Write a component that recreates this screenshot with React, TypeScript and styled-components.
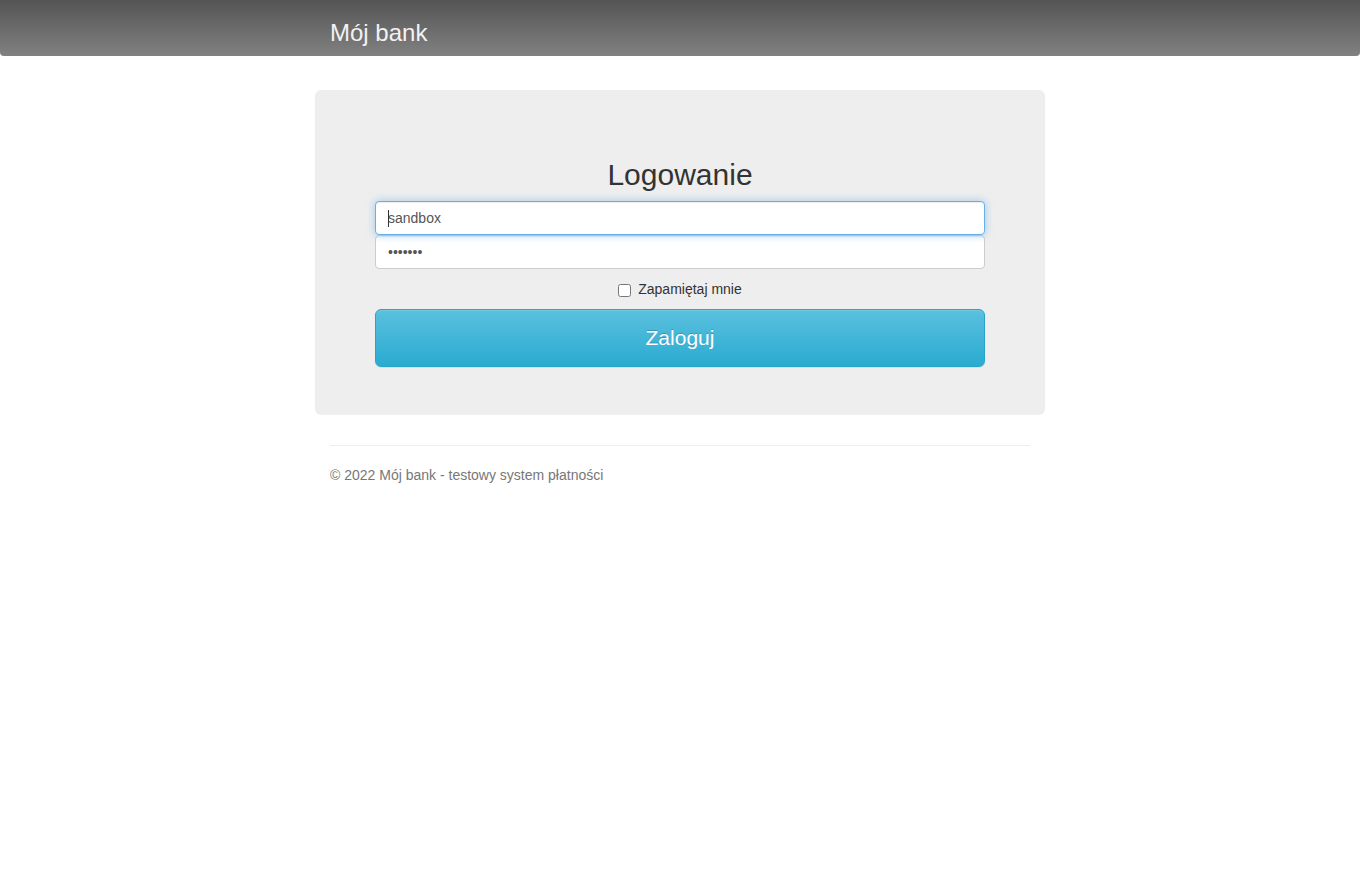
import React from "react";
import styled, { createGlobalStyle } from "styled-components";

const Global = createGlobalStyle`
  html, body { margin: 0; padding: 0; background: #fff; }
  body {
    font-family: "Liberation Sans", Arial, sans-serif;
    font-size: 14px;
    line-height: 1.42857;
    color: #333;
  }
  * { box-sizing: border-box; }
`;

const Navbar = styled.header`
  height: 56px;
  background: linear-gradient(to bottom, #545454 0%, #818181 100%);
  border-radius: 0 0 4px 4px;
  display: flex;
  justify-content: center;
`;

const NavInner = styled.div`
  width: 730px;
  padding: 0 15px;
  display: flex;
  align-items: flex-end;
`;

const Brand = styled.span`
  font-size: 24px;
  line-height: 28px;
  color: #f2f2f2;
  padding-bottom: 9px;
`;

const Container = styled.main`
  width: 730px;
  margin: 34px auto 0;
`;

const Card = styled.section`
  background: #eee;
  border-radius: 6px;
  padding: 48px 60px;
`;

const Form = styled.form`
  display: flex;
  flex-direction: column;
`;

const Heading = styled.h2`
  margin: 20px 0 10px;
  font-size: 30px;
  font-weight: 400;
  line-height: 33px;
  text-align: center;
  color: #333;
`;

const Field = styled.div`
  position: relative;
`;

const Caret = styled.span`
  position: absolute;
  left: 13px;
  top: 9px;
  width: 1px;
  height: 17px;
  background: #333;
  z-index: 3;
  pointer-events: none;
`;

const Input = styled.input<{ $focus?: boolean }>`
  display: block;
  width: 100%;
  height: 34px;
  padding: 6px 12px;
  font-family: "Liberation Sans", Arial, sans-serif;
  font-size: 14px;
  color: #555;
  background: #fff;
  border: 1px solid ${(p) => (p.$focus ? "#66afe9" : "#ccc")};
  border-radius: 4px;
  box-shadow: ${(p) =>
    p.$focus
      ? "inset 0 1px 1px rgba(0,0,0,.075), 0 0 8px rgba(102,175,233,.6)"
      : "inset 0 1px 1px rgba(0,0,0,.075)"};
  outline: none;
  caret-color: transparent;
  position: relative;
  z-index: ${(p) => (p.$focus ? 2 : 1)};
  margin: 0;
`;

const CheckRow = styled.label`
  display: flex;
  align-items: center;
  justify-content: center;
  gap: 7px;
  margin: 11px 0 9px;
  height: 20px;
  font-size: 14px;
  color: #333;
`;

const Check = styled.input`
  width: 13px;
  height: 13px;
  margin: 0;
`;

const Button = styled.button`
  height: 58px;
  width: 100%;
  font-family: "Liberation Sans", Arial, sans-serif;
  font-size: 21px;
  color: #fff;
  border: 1px solid #28a4c9;
  border-radius: 6px;
  background: linear-gradient(to bottom, #5bc0de 0%, #2aabd2 100%);
  box-shadow: inset 0 1px 0 rgba(255,255,255,.15), 0 1px 1px rgba(0,0,0,.075);
  text-shadow: 0 -1px 0 rgba(0,0,0,.2);
  cursor: pointer;
`;

const Footer = styled.footer`
  margin: 30px 15px 0;
  border-top: 1px solid #eee;
  padding-top: 19px;
  color: #777;
  font-size: 14px;
  line-height: 20px;
`;

export default function App() {
  return (
    <>
      <Global />
      <Navbar>
        <NavInner>
          <Brand>Mój bank</Brand>
        </NavInner>
      </Navbar>
      <Container>
        <Card>
          <Form onSubmit={(e) => e.preventDefault()}>
            <Heading>Logowanie</Heading>
            <Field>
              <Input $focus type="text" defaultValue="sandbox" />
              <Caret />
            </Field>
            <Field>
              <Input type="password" defaultValue="1234567" />
            </Field>
            <CheckRow>
              <Check type="checkbox" />
              Zapamiętaj mnie
            </CheckRow>
            <Button type="submit">Zaloguj</Button>
          </Form>
        </Card>
        <Footer>© 2022 Mój bank - testowy system płatności</Footer>
      </Container>
    </>
  );
}
